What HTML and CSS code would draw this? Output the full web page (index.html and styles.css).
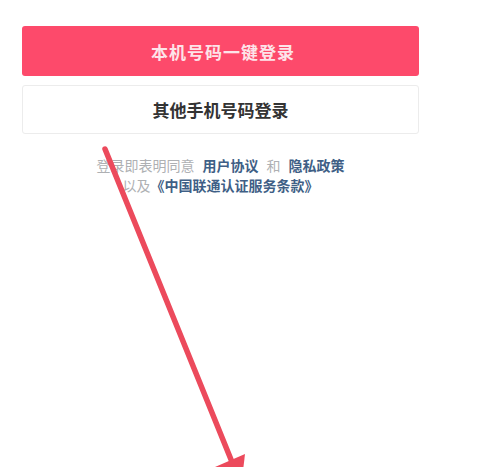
FILE: index.html
```html
<!DOCTYPE html>
<html lang="zh-CN">
<head>
<meta charset="utf-8">
<title>登录</title>
<link rel="stylesheet" href="styles.css">
</head>
<body>
<div class="page">
  <div class="actions">
    <div class="btn btn-primary">本机号码一键登录</div>
    <div class="btn btn-secondary">其他手机号码登录</div>
    <div class="agreement">
      <div class="line"><span>登录即表明同意</span><span class="link gap">用户协议</span><span class="gap-r">和</span><span class="link">隐私政策</span></div>
      <div class="line"><span>以及</span><span class="link">《中国联通认证服务条款》</span></div>
    </div>
  </div>
  <svg class="arrow" width="500" height="467" viewBox="0 0 500 467">
    <line x1="105" y1="149" x2="232" y2="462" stroke="#ec4a5c" stroke-width="5.5" stroke-linecap="round"/>
    <polygon points="245,454 215,467 241,488" fill="#ec4a5c"/>
  </svg>
</div>
</body>
</html>
```

FILE: styles.css
```css
html, body {
  margin: 0;
  padding: 0;
  background: #ffffff;
}
body {
  font-family: "Noto Sans CJK SC", "Noto Sans", sans-serif;
  width: 500px;
  height: 467px;
  overflow: hidden;
}
.page {
  position: relative;
  width: 500px;
  height: 467px;
}
.actions {
  padding: 26px 0 0 22px;
  width: 397px;
  display: flex;
  flex-direction: column;
}
.btn {
  box-sizing: border-box;
  display: flex;
  align-items: center;
  justify-content: center;
  border-radius: 3px;
  font-size: 17px;
}
.btn-primary {
  height: 50px;
  background: #fd4a6b;
  color: #fde4e9;
  font-weight: 700;
  letter-spacing: 1px;
  padding-left: 5px;
}
.btn-secondary {
  margin-top: 9px;
  height: 49px;
  border: 1px solid #ececec;
  background: #fff;
  color: #333;
  font-weight: 700;
}
.agreement {
  margin-top: 21px;
  font-size: 14px;
  line-height: 20px;
  color: #aeb0b3;
  display: flex;
  flex-direction: column;
  align-items: center;
}
.line {
  display: flex;
  white-space: nowrap;
}
.link {
  color: #3f5f86;
  font-weight: 700;
}
.gap {
  margin: 0 8px;
}
.gap-r {
  margin-right: 8px;
}
.arrow {
  position: absolute;
  left: 0;
  top: 0;
}
```
